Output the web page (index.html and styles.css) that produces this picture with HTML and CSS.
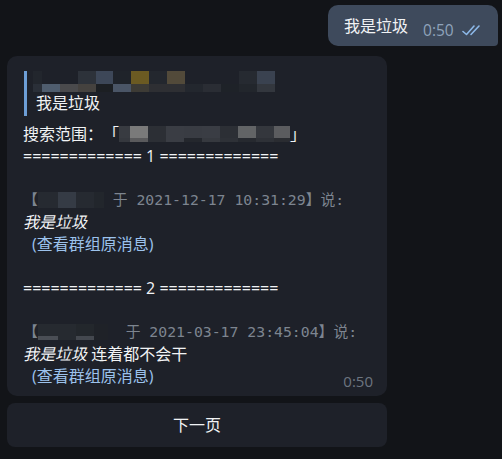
FILE: index.html
```html
<!DOCTYPE html>
<html lang="zh-CN">
<head>
    <meta charset="UTF-8">
    <meta name="viewport" content="width=device-width, initial-scale=1.0">
    <title>搜索结果</title>
    <link rel="stylesheet" href="styles.css">
</head>
<body>
    <div class="chat">
        <div class="out">
            <div class="out-bubble">
                <span class="out-text">我是垃圾</span>
                <span class="out-time">0:50</span>
                <svg class="checks" width="22" height="12" viewBox="0 0 22 12">
                    <path d="M1 7.5 L4.5 10.5 L12 2" fill="none" stroke="#8cb8e8" stroke-width="1.6" stroke-linecap="round" stroke-linejoin="round"/>
                    <path d="M9 10.5 L17 2" fill="none" stroke="#8cb8e8" stroke-width="1.6" stroke-linecap="round"/>
                </svg>
            </div>
        </div>

        <div class="msg">
            <div class="quote">
                <div class="mosaic-name"></div>
                <div class="line">我是垃圾</div>
            </div>
            <div class="line">搜索范围：「<span class="mosaic-range"></span>」</div>
            <div class="line">============= 1 =============</div>
            <div class="line"></div>
            <div class="line mono">【<span class="mosaic-user1"></span> 于 2021-12-17 10:31:29】说:</div>
            <div class="line"><em>我是垃圾</em></div>
            <div class="line link">(查看群组原消息)</div>
            <div class="line"></div>
            <div class="line">============= 2 =============</div>
            <div class="line"></div>
            <div class="line mono">【<span class="mosaic-user2"></span>  于 2021-03-17 23:45:04】说:</div>
            <div class="line"><em>我是垃圾</em> 连着都不会干</div>
            <div class="line link">(查看群组原消息)</div>
            <span class="time">0:50</span>
        </div>

        <div class="next">下一页</div>
    </div>
</body>
</html>
```

FILE: styles.css
```css
body {
    margin: 0;
    background-color: #121418;
    font-family: "Open Sans", "Noto Sans CJK SC", sans-serif;
    font-size: 16px;
    color: #f1f3f5;
    text-spacing-trim: space-all;
}
.chat {
    padding: 5px 4px 0 7px;
}
.out {
    display: flex;
    justify-content: flex-end;
}
.out-bubble {
    display: flex;
    align-items: center;
    width: 170px;
    height: 41px;
    box-sizing: border-box;
    padding: 0 0 0 16px;
    background-color: #3e4a5c;
    border-radius: 10px 10px 4px 10px;
}
.out-text {
    margin-top: -2px;
}
.out-time {
    margin: 8px 0 0 15px;
    font-size: 15.5px;
    color: #8fa3bb;
}
.checks {
    margin: 8px 0 0 8px;
}
.msg {
    position: relative;
    width: 380px;
    box-sizing: border-box;
    margin-top: 10px;
    padding: 15px 16px 9px;
    background-color: #1e2129;
    border-radius: 10px;
}
.line {
    height: 22px;
    line-height: 22px;
    white-space: pre;
}
.quote {
    margin: 0 0 7px 1px;
    padding: 0 0 2px 9px;
    border-left: 3px solid #6d9ed6;
}
.mosaic-name {
    width: 242px;
    height: 21px;
    margin-left: -3px;
    background:
        linear-gradient(to right, #22262d 0 9px, transparent 9px 45px, #2d323a 45px 63px, #3d4758 63px 80px, #1f232a 80px 98px, #6b5a22 98px 116px, #23272e 116px 134px, #524a3a 134px 152px, transparent 152px 206px, #262a31 206px 224px, #3a4250 224px 242px) top / 100% 13px no-repeat,
        linear-gradient(to right, #2a2f38 0 9px, #4f5d6e 9px 27px, #4a4a4c 27px 45px, #45423f 45px 63px, #1c1f23 63px 80px, #4a5566 80px 98px, #3d3b35 98px 116px, #2e2f33 116px 152px, #23272e 152px 170px, #2a2d34 170px 188px, #1e2228 188px 206px, #22262c 206px 224px, #33373e 224px 242px) bottom / 100% 8px no-repeat;
}
.mosaic-range,
.mosaic-user1,
.mosaic-user2 {
    display: inline-block;
    height: 16px;
    margin-top: 3px;
    vertical-align: top;
}
.mosaic-range {
    width: 171px;
    background:
        linear-gradient(to right, #383b41 0 11px, #7a7a7a 11px 29px, #2c2f35 29px 47px, #3a3d44 47px 65px, #393c43 65px 83px, #3a3d44 83px 101px, #2c2f35 101px 119px, #626466 119px 137px, #34373d 137px 155px, #5b5c5f 155px 171px) top / 100% 12px no-repeat,
        linear-gradient(to right, #35383e 0 11px, #5a5a5c 11px 29px, #2c2f35 29px 47px, #3a3d44 47px 65px, #24272d 65px 83px, #36393f 83px 101px, #2e3137 101px 119px, #26292f 119px 137px, #2e3137 137px 155px, #2a2c31 155px 171px) bottom / 100% 4px no-repeat;
}
.mosaic-user1 {
    width: 66px;
    background: linear-gradient(to right, #262a31 0 20px, #353b45 20px 38px, #262a31 38px 56px, #22262c 56px 66px);
}
.mosaic-user2 {
    width: 70px;
    background:
        linear-gradient(to right, #262a30 0 38px, #23272c 38px 56px, #1f2228 56px 70px) top / 100% 12px no-repeat,
        linear-gradient(to right, #4a4e55 0 20px, #262a30 20px 38px, #44484f 38px 56px, #1f2228 56px 70px) bottom / 100% 4px no-repeat;
}
.mono {
    font-family: "DejaVu Sans Mono", "Noto Sans CJK SC", monospace;
    font-size: 14.8px;
    color: #7d8590;
}
.link {
    padding-left: 9px;
    color: #9cc2ec;
}
.time {
    position: absolute;
    right: 14px;
    bottom: 5px;
    font-size: 15px;
    color: #6d7580;
}
.next {
    width: 380px;
    height: 44px;
    margin-top: 7px;
    line-height: 44px;
    text-align: center;
    background-color: #1e2129;
    border-radius: 8px;
}
```
